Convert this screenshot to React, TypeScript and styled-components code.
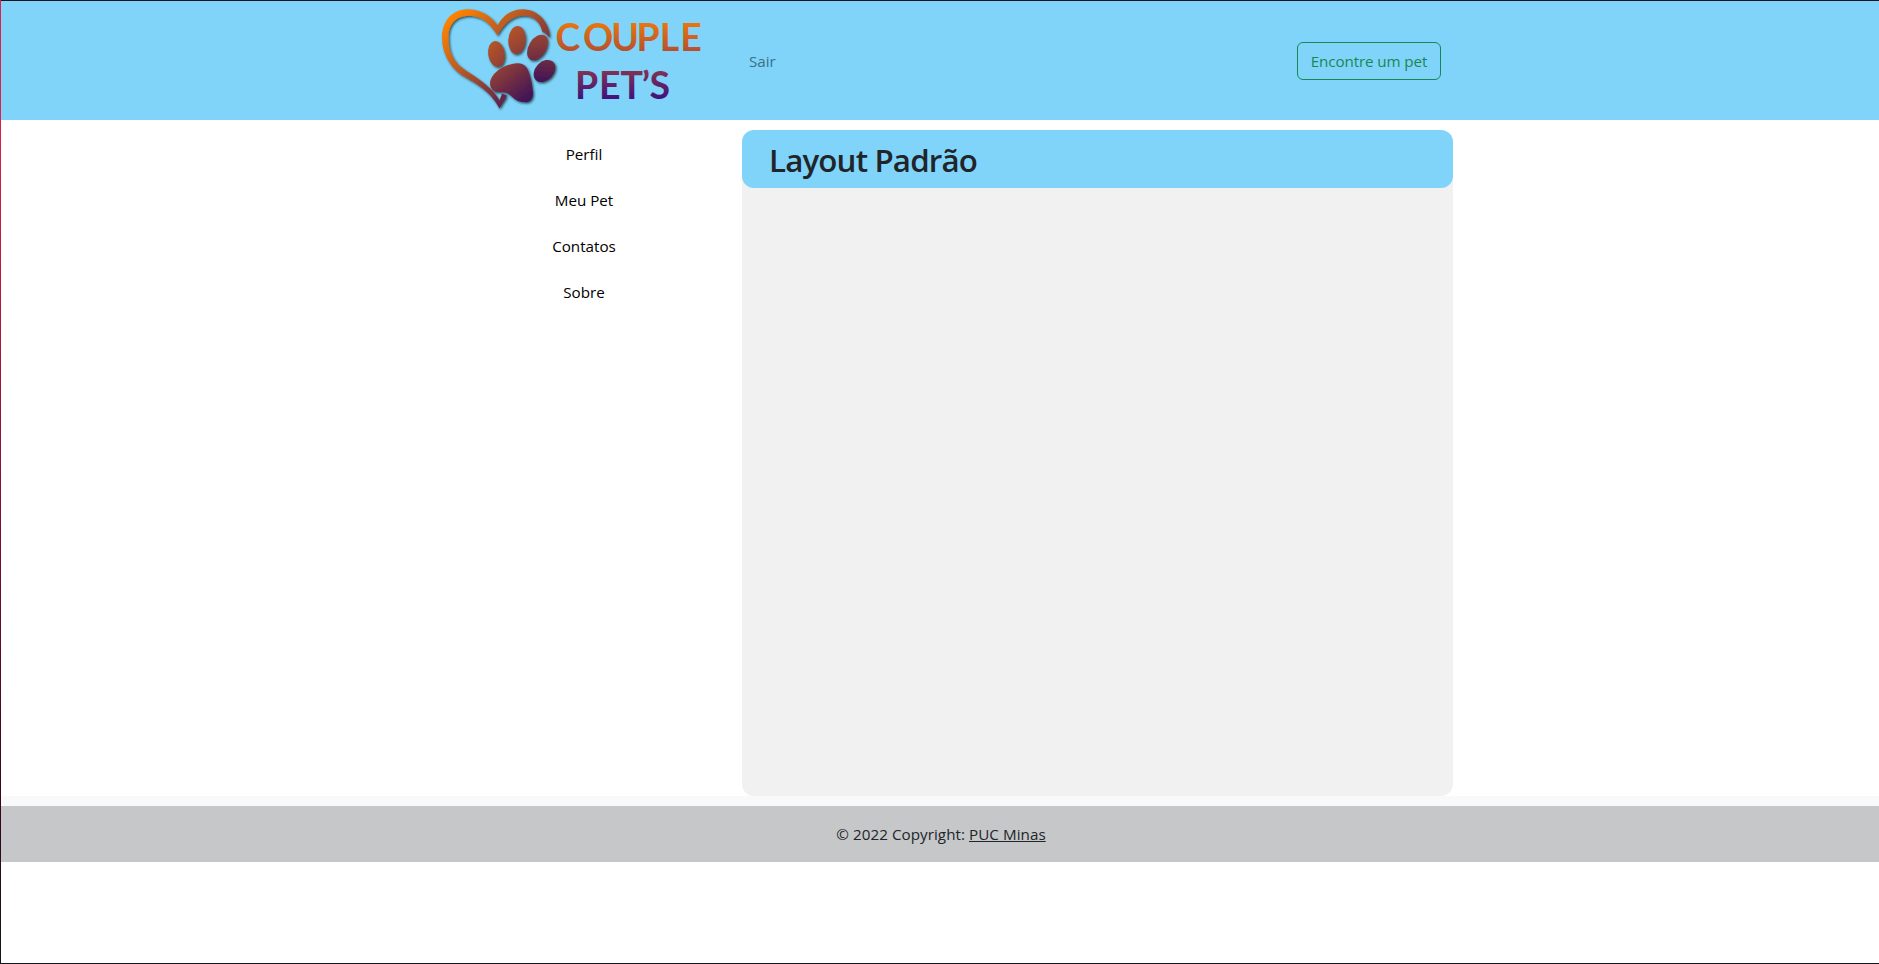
import React from "react";
import styled, { createGlobalStyle } from "styled-components";

const GlobalStyle = createGlobalStyle`
  *, *::before, *::after { box-sizing: border-box; }
  body {
    margin: 0;
    background: #fff;
    color: #212529;
    font: 400 15.2px/24px "Open Sans", "Noto Sans", sans-serif;
  }
  a { color: inherit; }
`;

const Frame = styled.div`
  height: 964px;
  overflow: hidden;
  display: grid;
  grid-template-columns: 1px minmax(0, 1fr);
  background: #fff;
`;

const Edge = styled.div`
  background: linear-gradient(#dc1e4b, #dc1e4b 14%, #38051b 84%, #14141c);
`;

const Content = styled.div`
  border-top: 1px solid #14141c;
  border-bottom: 1px solid #14141c;
`;

const Header = styled.header`
  height: 119px;
  background: #80d4f9;
`;

const Container = styled.div`
  width: 1023px;
  margin-left: 429px;
  display: flex;
`;

const Navbar = styled(Container)`
  height: 100%;
  align-items: center;
  padding-right: 12px;
`;

const Logo = styled.svg`
  width: 290px;
  height: 119px;
  flex: none;
`;

const NavLink = styled.a`
  margin: 0 auto 0 29px;
  color: #3b7086;
  text-decoration: none;
`;

const FindButton = styled.button`
  width: 144px;
  height: 38px;
  padding: 0;
  border: 1px solid #198754;
  border-radius: 6px;
  background: transparent;
  color: #198754;
  font: inherit;
  letter-spacing: -0.1px;
  white-space: nowrap;
`;

const Main = styled(Container)`
  height: 676px;
  padding-top: 10px;
`;

const Sidebar = styled.nav`
  width: 312px;
  flex: none;
  padding-top: 1px;
  padding-right: 4px;
  display: flex;
  flex-direction: column;
  align-items: center;
`;

const MenuItem = styled.a`
  padding: 11px 12px;
  color: #000;
  text-decoration: none;
`;

const Panel = styled.main`
  flex: 1;
  background: #f1f1f1;
  border-radius: 12px;
`;

const Title = styled.h1`
  height: 58px;
  margin: 0;
  padding-left: 27px;
  border-radius: 12px;
  background: #80d4f9;
  font-size: 31.3px;
  line-height: 60px;
  font-weight: 600;
  letter-spacing: -0.85px;
`;

const Footer = styled.footer`
  padding-top: 10px;
  background: #f8f9fa;
`;

const Copyright = styled.div`
  height: 56px;
  padding: 16px 0 0 2px;
  text-align: center;
  letter-spacing: 0.05px;
  background: #c6c7c8;
`;

const LogoText = styled.text`
  font-family: "Lato", sans-serif;
  font-weight: 700;
  font-size: 39px;
`;

const menu = ["Perfil", "Meu Pet", "Contatos", "Sobre"];

const LETTER_SCALE = 0.96;

function LogoWord({ text, positions, y }: { text: string; positions: number[]; y: number }) {
  return (
    <LogoText
      transform={`scale(${LETTER_SCALE} 1)`}
      x={positions.map((x) => (x / LETTER_SCALE).toFixed(2)).join(" ")}
      y={y}
    >
      {text}
    </LogoText>
  );
}

function BrandLogo() {
  return (
    <Logo viewBox="430 1 290 119" role="img" aria-label="Couple Pet's">
      <defs>
        <linearGradient id="heart" gradientUnits="userSpaceOnUse" x1="445" y1="22" x2="522" y2="104">
          <stop offset="0" stopColor="#ff8300" />
          <stop offset=".5" stopColor="#a8502b" />
          <stop offset="1" stopColor="#4b1458" />
        </linearGradient>
        <linearGradient id="paw" gradientUnits="userSpaceOnUse" x1="493" y1="35" x2="538" y2="93">
          <stop offset="0" stopColor="#bd5a24" />
          <stop offset=".5" stopColor="#84383b" />
          <stop offset="1" stopColor="#3d1259" />
        </linearGradient>
        <linearGradient id="word" gradientUnits="userSpaceOnUse" x1="0" y1="24" x2="0" y2="99">
          <stop offset="0" stopColor="#e87510" />
          <stop offset=".37" stopColor="#b44f30" />
          <stop offset=".65" stopColor="#7c3054" />
          <stop offset="1" stopColor="#40127c" />
        </linearGradient>
        <filter id="shadow" x="-10%" y="-10%" width="125%" height="125%">
          <feDropShadow dx="1.2" dy="1.4" stdDeviation="1" floodColor="#152024" floodOpacity=".75" />
        </filter>
      </defs>
      <g filter="url(#shadow)">
        <path
          fill="url(#heart)"
          d="M497.500 25.500C490 14 478 9 467 9.300C451 10 442 22 442 38C442 52 449 65 459 73C472 82 489 88 499.500 108.500C502 103 505 100 507 95.500L502 93.500L499.500 100.500C493 89 481 80 468 72C454 63 448.500 54 448.500 37C448.500 23 457 16 469 15.800C482 16 490 23 497.500 35.500C504 23 513 15.800 524 15.800C534 16 540 22 542.500 32C545 32 547 35 550 37.500C549 22 538 9.500 523 9.300C512 9.300 503 15 497.500 25.500Z"
        />
        <g fill="url(#paw)">
          <ellipse cx="496.500" cy="54" rx="8.300" ry="13" transform="rotate(-9 496.500 54)" />
          <ellipse cx="517" cy="40" rx="8.700" ry="14" transform="rotate(4 517 40)" />
          <ellipse cx="537.500" cy="47.500" rx="8.800" ry="14" transform="rotate(31 537.500 47.500)" />
          <ellipse cx="544.500" cy="71" rx="9.200" ry="12.500" transform="rotate(43 544.500 71)" />
          <path d="M517 63.300C525 63 528 68 530 76C532 83 532 85 533 92C533.500 99 530 103 524 102C515 102 513 96 507 93C502 91 498 93 495 91.500C490 89 489 83 491 79C495 70 506 64 517 63.300Z" />
        </g>
      </g>
      <g fill="url(#word)">
        <LogoWord text="COUPLE" positions={[555.6, 583, 611.3, 636.5, 659.8, 680.3]} y={51.5} />
        <LogoWord text="PET’S" positions={[575, 599, 620.5, 641.8, 649.5]} y={98.8} />
      </g>
    </Logo>
  );
}

export default function App() {
  return (
    <Frame>
      <GlobalStyle />
      <Edge />
      <Content>
        <Header>
          <Navbar>
            <BrandLogo />
            <NavLink>Sair</NavLink>
            <FindButton>Encontre um pet</FindButton>
          </Navbar>
        </Header>
        <Main>
          <Sidebar>
            {menu.map((label) => (
              <MenuItem key={label}>{label}</MenuItem>
            ))}
          </Sidebar>
          <Panel>
            <Title>Layout Padrão</Title>
          </Panel>
        </Main>
        <Footer>
          <Copyright>
            © 2022 Copyright: <a href="#puc">PUC Minas</a>
          </Copyright>
        </Footer>
      </Content>
    </Frame>
  );
}
